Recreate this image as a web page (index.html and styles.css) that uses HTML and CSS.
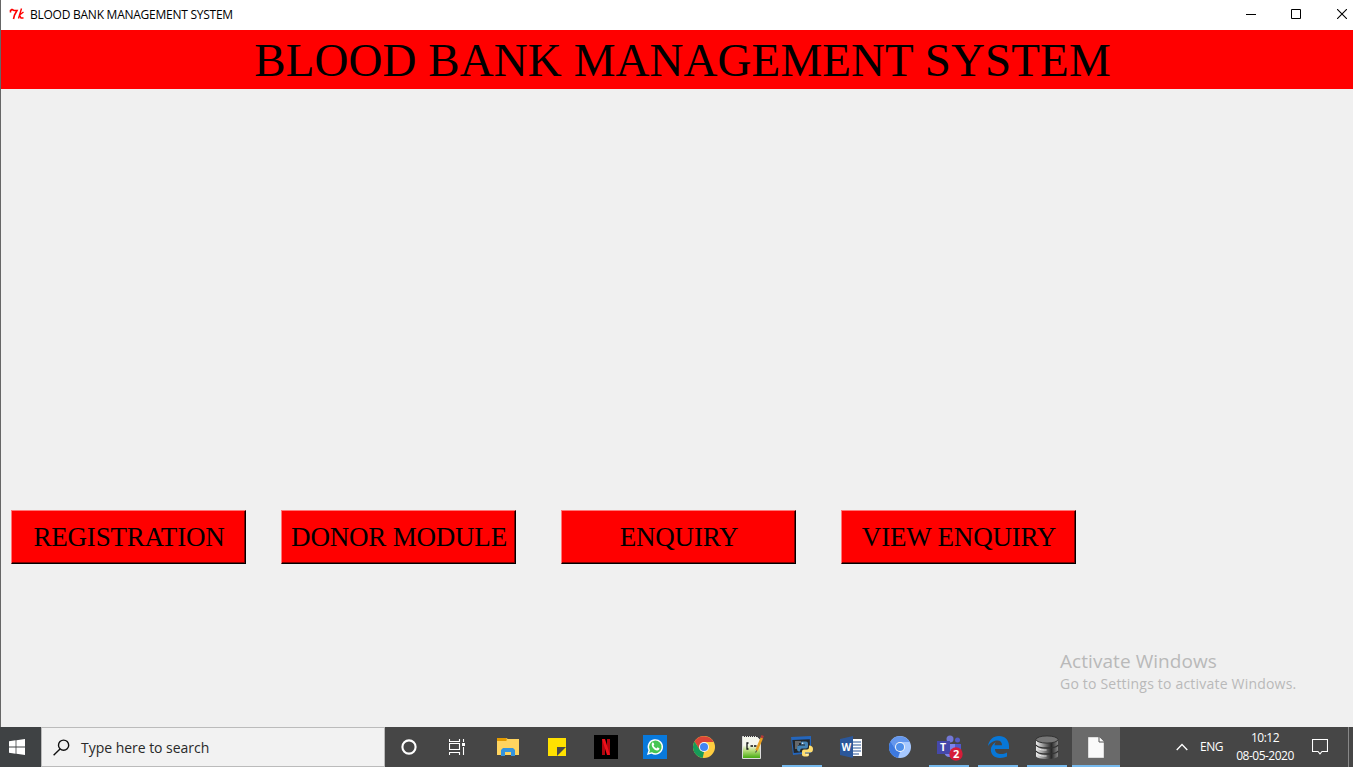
FILE: index.html
```html
<!DOCTYPE html>
<html lang="en">
<head>
<meta charset="utf-8">
<title>BLOOD BANK MANAGEMENT SYSTEM</title>
<link rel="stylesheet" href="styles.css">
</head>
<body>
<div class="window">
  <header class="titlebar">
    <svg class="tk" width="16" height="14" viewBox="0 0 16 14" fill="none" stroke="#f00"><path d="M1.5 5.5V3.5l1.5-1 2 1h3L5.5 8l-1 4" stroke-width="1.6"/><path d="M12.5 1.5 9.5 11.5M14.5 5l-4 3 1.5 3h2.500" stroke-width="1.4"/></svg>
    <span class="title">BLOOD BANK MANAGEMENT SYSTEM</span>
    <div class="controls">
      <svg width="10" height="10" viewBox="0 0 10 10"><path d="M0 5.5h10" stroke="#000"/></svg>
      <svg width="10" height="10" viewBox="0 0 10 10"><path d="M.5.5h9v9h-9z" fill="none" stroke="#000"/></svg>
      <svg width="10" height="10" viewBox="0 0 10 10"><path d="m0 0 10 10M10 0 0 10" stroke="#000" stroke-width="1.1"/></svg>
    </div>
  </header>
  <h1 class="banner"><span>BLOOD BANK MANAGEMENT SYSTEM</span></h1>
  <main class="content">
    <nav class="buttons">
      <button class="btn">REGISTRATION</button>
      <button class="btn">DONOR MODULE</button>
      <button class="btn">ENQUIRY</button>
      <button class="btn">VIEW ENQUIRY</button>
    </nav>
    <div class="watermark">
      <p class="wm-title">Activate Windows</p>
      <p class="wm-text">Go to Settings to activate Windows.</p>
    </div>
  </main>
</div>
<footer class="taskbar">
  <div class="start"><svg width="16" height="16" viewBox="0 0 16 16" fill="#fff"><path d="M0 2.3 6.6 1.3v6.2H0zM7.4 1.2 16 0v7.5H7.4zM0 8.4h6.6v6.3L0 13.7zM7.4 8.4H16V16l-8.6-1.2z"/></svg></div>
  <div class="search">
    <svg width="17" height="17" viewBox="0 0 17 17" fill="none" stroke="#111" stroke-width="1.4"><circle cx="10.6" cy="6.2" r="5.1"/><path d="M7 10 .6 16.3"/></svg>
    <span>Type here to search</span>
  </div>
  <div class="cell"><svg width="16" height="16" viewBox="0 0 16 16"><circle cx="8" cy="8" r="6.6" fill="none" stroke="#fff" stroke-width="2.1"/></svg></div>
  <div class="cell"><svg width="16" height="16" viewBox="0 0 16 16" fill="none" stroke="#fff" stroke-width="1.1"><path d="M.5 0v2.500h10V0M.5 4.500h10v6H.5zM.5 16v-2.500h10V16M14.500 0v3M14.500 8v8"/><path d="M13 4h3v3h-3z" fill="#fff" stroke="none"/></svg></div>
  <div class="apps">
    <div class="cell"><svg width="22" height="18" viewBox="0 0 22 18"><path d="M0 0h9l2 1h11v16H0z" fill="#ffd45f"/><path d="M0 0h9l1 2-1 1H0z" fill="#e39b00"/><path d="M4 18v-6l2-2h10l2 2v6h-4v-4H8v4z" fill="#3594dd"/></svg></div>
    <div class="cell"><svg width="18" height="18" viewBox="0 0 18 18"><path d="M0 0h18v9H9v9H0z" fill="#ffe100"/><path d="M9 9h9l-9 9z" fill="#494949"/><path d="M18 9v9H9z" fill="#ffe100"/></svg></div>
    <div class="cell"><svg width="24" height="24" viewBox="0 0 24 24"><path d="M0 0h24v24H0z"/><path d="M8 4h3v16H8zM13 4h3v16h-3z" fill="#b1060f"/><path d="M8 4h3l5 16h-3z" fill="#ed101b"/></svg></div>
    <div class="cell"><svg width="24" height="24" viewBox="0 0 24 24"><path d="M0 0h24v24H0z" fill="#0879dc"/><path d="m5 19 1.200-3.700a7 7 0 1 1 2.500 2.600z" fill="#46c654" stroke="#fff" stroke-width="1.4"/><path d="M9 8c.7-.8 1.500-.6 1.800.2l.5 1.300-.8 1.100c.7 1.400 1.600 2.200 2.900 2.800l1.100-1.100 1.900 1c.3 1.100-.8 2.200-2.300 2.200-3.200-.3-6.400-4.400-5.100-7.500z" fill="#fff"/></svg></div>
    <div class="cell"><svg width="22" height="22" viewBox="0 0 22 22"><circle cx="11" cy="11" r="11" fill="#ffcd40"/><path d="M1.500 5.500A11 11 0 0 1 20.600 6H11l-4.400 7.500z" fill="#db4437"/><path d="M1.500 5.500 6.700 13.500 11 16l-1.300 6A11 11 0 0 1 1.500 5.500z" fill="#169b59"/><circle cx="11" cy="11" r="5" fill="#f5f5f5"/><circle cx="11" cy="11" r="4" fill="#4285f4"/></svg></div>
    <div class="cell"><svg width="22" height="24" viewBox="0 0 22 24"><defs><linearGradient id="page" x2="0" y2="1"><stop offset=".4" stop-color="#f4f6ec"/><stop offset=".65" stop-color="#b5dc78"/><stop offset="1" stop-color="#3fa80c"/></linearGradient></defs><path d="M.5 1.500h14l4 4v18H.5z" fill="url(#page)" stroke="#ddd"/><path d="M2 1.500h13" stroke="#333" stroke-dasharray="1 1"/><path d="M6.500 8H5v6h1.500M8.500 11h2.500M12 11h2.500" fill="none" stroke="#111" stroke-width="1.3"/><path d="m20 2.500-5.500 13" stroke="#e8a020" stroke-width="2.600"/><path d="m20.700.5-1 2.500" stroke="#b43a38" stroke-width="2.600"/><path d="m14.500 15.500-.8 2" stroke="#333"/></svg></div>
    <div class="cell running"><svg width="24" height="24" viewBox="0 0 24 24"><path d="m1 2 20-1v17L3 20z" fill="#2466bd"/><path d="m2.300 5 17.500-.7v12.200l-16 1.500z" fill="#23272b"/><path d="M5 7h6M5 9h4M5 11h3M5 13h2" stroke="#aaa"/><g transform="translate(7 6.500)"><path d="M5 0h4q2 0 2 2v3q0 2-2 2H5Q3 7 3 10H2Q0 10 0 7q0-3 2-3h6V3H4V1q0-1 1-1z" fill="#4584b6"/><path d="M12 4q4 0 4 3.500T13 11H8v1h4v1.500Q12 15 8.500 15 5 15 5 13v-3q0-2 2-2h3q2 0 2-2z" fill="#ffde70"/><circle cx="5.700" cy="1.700" r=".7" fill="#fff"/><circle cx="10" cy="13.300" r=".7" fill="#fff"/></g></svg></div>
    <div class="cell"><svg width="24" height="22" viewBox="0 0 24 22"><path d="M13 3h10v17H13z" fill="#fff"/><path d="M14 6h8M14 9h8M14 12h8M14 15h8M14 18h6" stroke="#2b579a" stroke-width="1.200"/><path d="m1 3 13-3v22L1 19z" fill="#2b579a"/><text class="bold" x="2.500" y="15" font-size="10" fill="#fff">W</text></svg></div>
    <div class="cell"><svg width="22" height="22" viewBox="0 0 22 22"><circle cx="11" cy="11" r="11" fill="#a6c8ff"/><path d="M1.500 5.500A11 11 0 0 1 20.600 6H11l-4.400 7.500z" fill="#6497ed"/><path d="M1.500 5.500 6.700 13.500 11 16l-2 6A11 11 0 0 1 1.500 5.500z" fill="#3d79df"/><circle cx="11" cy="11" r="5" fill="#f5f5f5"/><circle cx="11" cy="11" r="4" fill="#4f8fea"/></svg></div>
    <div class="cell running"><svg width="28" height="28" viewBox="0 0 28 28"><circle cx="15" cy="6" r="3.500" fill="#7378d7"/><circle cx="22.500" cy="7" r="2.500" fill="#555dc6"/><path d="M19 11h7v7q-1 4-5 4z" fill="#5059c9"/><path d="M9 11h11v8q-1 5-5.500 5T9 19z" fill="#7b83eb"/><path d="M2 8h13v13H2z" fill="#4548aa"/><text class="bold" x="5" y="18.300" font-size="10.500" fill="#fff">T</text><circle cx="21" cy="21" r="6.700" fill="#d51c38"/><text class="bold" x="17.900" y="25" font-size="11" fill="#fff">2</text></svg></div>
    <div class="cell running"><svg width="21" height="22" viewBox="0 0 21 22"><path d="M0 10C1 4 5 0 11 0c6 0 10 4 10 10v3H7c0 4 3 5 6 5 2 0 4-.5 6-1.600v4.200C17 21.500 15 22 12 22c-6 0-10-4-9-10 1-3 3-5 5-6-1 1-1.300 2-1.400 3.300H14C14 6 12.400 4.500 9.500 4.500 5 4.500 2 7 0 10z" fill="#0877d7"/></svg></div>
    <div class="cell running"><svg width="24" height="25" viewBox="0 0 24 25"><defs><linearGradient id="metal"><stop stop-color="#eee"/><stop offset=".25" stop-color="#aaa"/><stop offset=".7" stop-color="#292929"/><stop offset="1" stop-color="#888"/></linearGradient></defs><path d="M1 4v17c0 4 22 4 22 0V4z" fill="url(#metal)"/><ellipse cx="12" cy="4.500" rx="11" ry="3.600" fill="#777" stroke="#333"/><path d="M1 10c2 4 20 4 22 0M1 16c2 4 20 4 22 0" fill="none" stroke="#333" stroke-width="1.500"/><path d="M1.500 11.500c2 4 8 3.500 10 3.500M1.500 17.500c2 4 8 3.500 10 3.500" fill="none" stroke="#eee"/></svg></div>
    <div class="cell running active"><svg width="16" height="21" viewBox="0 0 16 21"><path d="M.5.5h11l4 4v16H.5z" fill="#fafafa" stroke="#ddd"/><path d="M11 0v5h5" fill="none" stroke="#555"/></svg></div>
  </div>
  <div class="tray">
    <svg width="12" height="8" viewBox="0 0 12 8"><path d="m.7 7 5.300-5.500L11.300 7" fill="none" stroke="#fff" stroke-width="1.300"/></svg>
    <span class="lang">ENG</span>
    <div class="clock"><span class="time">10:12</span><span class="date">08-05-2020</span></div>
    <svg class="notice" width="16" height="16" viewBox="0 0 16 16"><path d="M.5.5h15v12H10l-2 2.300-2-2.300H.5z" fill="none" stroke="#fff" stroke-width="1.100"/></svg>
    <div class="show-desktop"></div>
  </div>
</footer>
</body>
</html>
```
FILE: styles.css
```css
* { box-sizing: border-box; }
body { margin: 0; width: 1353px; height: 767px; overflow: hidden; background: #f0f0f0; font-family: "Open Sans", "Noto Sans", sans-serif; }
svg { display: block; flex: none; }
.bold { font-family: "Open Sans", sans-serif; font-weight: 700; }
.window { height: 727px; border-left: 1px solid #666; display: flex; flex-direction: column; }
.titlebar { height: 30px; background: #fff; display: flex; align-items: center; padding: 0 6px 2px 8px; }
.title { margin-left: 5px; font-size: 12px; letter-spacing: -.25px; white-space: nowrap; padding-top: 1px; }
.controls { margin-left: auto; display: flex; gap: 35px; }
.controls svg:last-child { margin-left: 1px; }
.banner { margin: 0; height: 59px; background: #f00; display: flex; align-items: center; justify-content: center; font: 47px/59px "Liberation Serif", serif; letter-spacing: .08px; white-space: nowrap; padding-left: 11px; padding-top: 2px; }
.content { flex: 1; padding-left: 10px; }
.buttons { display: flex; padding-top: 421px; }
.btn { width: 235px; height: 54px; padding: 0 0 1px 1px; background: #f00; border: 1px solid; border-color: #ff7878 #000 #000 #ff7878; box-shadow: inset -1px -1px #800000; font: 27px/50px "Liberation Serif", serif; letter-spacing: -.2px; color: #000; white-space: nowrap; margin-right: 45px; }
.btn:first-child { margin-right: 35px; }
.watermark { padding: 85px 0 0 1049px; color: #b9b9b9; white-space: nowrap; }
.watermark p { margin: 0; }
.wm-title { font-size: 19px; line-height: 24px; letter-spacing: .06px; }
.wm-text { font-size: 14px; line-height: 21px; letter-spacing: .2px; }
.taskbar { height: 40px; display: flex; background: #464646; color: #fff; }
.start { width: 41px; background: #3f4244; display: flex; align-items: center; padding-left: 9px; }
.search { width: 344px; background: #f2f2f2; border: 1px solid #bbb; display: flex; align-items: center; gap: 11px; padding-left: 11px; color: #292929; font-size: 14px; letter-spacing: -.03px; }
.search span { padding-top: 1px; white-space: nowrap; }
.cell { width: 48px; height: 40px; display: flex; align-items: center; justify-content: center; flex: none; }
.apps { display: flex; gap: 1px; margin-left: 3px; }
.running { background: linear-gradient(#76b9ed, #76b9ed) center bottom / 40px 2px no-repeat; }
.active { background: linear-gradient(#76b9ed, #76b9ed) center bottom / 48px 2px no-repeat #6a6a6a; }
.tray { flex: 1; margin-left: 56px; display: flex; align-items: center; font-size: 12px; }
.lang { width: 24px; margin-left: 12px; letter-spacing: -.5px; padding-bottom: 1px; }
.clock { width: 60px; margin-left: 11px; display: flex; flex-direction: column; align-items: center; line-height: 18px; letter-spacing: -.5px; padding-bottom: 1px; white-space: nowrap; }
.notice { margin-left: 17px; }
.show-desktop { margin-left: auto; width: 5px; height: 40px; border-left: 1px solid #888; }
```
